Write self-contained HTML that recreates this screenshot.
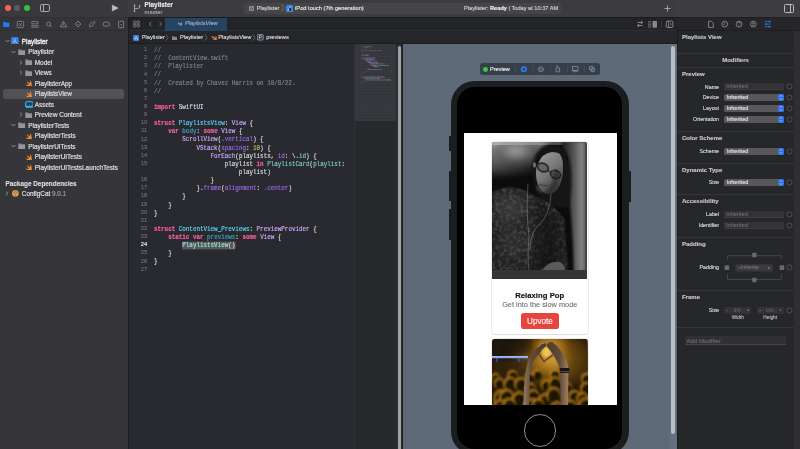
<!DOCTYPE html>
<html><head><meta charset="utf-8">
<style>
*{margin:0;padding:0;box-sizing:border-box}
html,body{width:800px;height:449px;overflow:hidden;background:#292a2f;font-family:"Liberation Sans",sans-serif}
.a{position:absolute}
.t{position:absolute;white-space:pre;line-height:1;-webkit-text-stroke:0.15px currentColor}
#W{position:absolute;left:0;top:0;width:800px;height:449px;will-change:transform;overflow:hidden}
#side{left:0;top:0;width:128px;height:449px;background:#363539}
#sidetb{left:0;top:0;width:128px;height:17px;background:#39383c}
#navtabs{left:0;top:17px;width:128px;height:14px;background:#353438;border-top:1px solid #302f33;border-bottom:1px solid #2e2d31}
#sidesep{left:128px;top:17px;width:1px;height:432px;background:#1e1d21}
#tb{left:128px;top:0;width:549px;height:17.5px;background:#3c3c3e;border-bottom:1px solid #1f1f22}
#tbr{left:677px;top:0;width:123px;height:18px;background:#3e3e40;border-bottom:1px solid #1f1f22}
#tabbar{left:129px;top:17px;width:548px;height:14px;background:#232427;border-top:1px solid #1b1b1e;border-bottom:1px solid #2d2e31}
#crumb{left:129px;top:31px;width:548px;height:13px;background:#252629;border-bottom:1px solid #1c1c1f}
#code{left:129px;top:44px;width:225px;height:405px;background:#292a2f}
#mini{left:354px;top:44px;width:49px;height:405px;background:#28292d}
#canvas{left:403px;top:44px;width:274px;height:405px;background:#5f6a78}
#insp{left:677px;top:18px;width:123px;height:431px;background:#262729;border-left:1px solid #1b1b1d}
.row{font-size:6.4px;color:#dcdcde;-webkit-text-stroke:0.22px currentColor}
.code{font-family:"Liberation Mono",monospace;font-size:6.4px;color:#dfdfe0;transform:scaleX(0.922);transform-origin:0 0}
.ln{font-family:"Liberation Sans",sans-serif;font-size:5.8px;color:#6c6c71;text-align:right;width:20.2px}
.k{color:#fc5fa3;font-weight:bold}
.cm{color:#7a8692}
.ty{color:#5dd8ff}
.st{color:#d0a8ff}
.sf{color:#a167e6}
.pj{color:#7ccdb8}
.nm{color:#d0bf69}
.dc{color:#41a1c0}
.hl{color:#9fe3cf;background:#56585b;box-shadow:0 0 0 0.4px #56585b}
.il{font-size:5.3px;color:#d6d6d8;text-align:right;width:60px}
.sec{font-size:6px;font-weight:bold;color:#c8c8ca}
.fld{position:absolute;left:724px;width:60px;height:7px;background:#58585c;border-radius:1.5px}
.fld span{position:absolute;left:2.6px;top:1.5px;font-size:5.6px;color:#e8e8ea;white-space:pre;line-height:1;-webkit-text-stroke:0.12px currentColor}
.fld i{position:absolute;right:0;top:0;width:6px;height:7px;background:#2f6fe4;border-radius:1.5px}
.rad{position:absolute;left:786.5px;width:5.5px;height:5.5px;border:0.6px solid #6a6a6e;border-radius:50%}
.hsep{position:absolute;left:677px;width:117px;height:1px;background:#353537}
</style></head><body><div id="W">
<!-- left sidebar -->
<div class="a" id="side"></div>
<div class="a" id="sidetb"></div>
<div class="a" id="navtabs"></div>
<div class="a" id="sidesep"></div>
<!-- traffic lights -->
<div class="a" style="left:4.7px;top:5px;width:6px;height:6px;border-radius:50%;background:#fe5f57"></div>
<div class="a" style="left:14px;top:5px;width:6px;height:6px;border-radius:50%;background:#5b5a5e"></div>
<div class="a" style="left:23.7px;top:5px;width:6px;height:6px;border-radius:50%;background:#29c73f"></div>
<!-- sidebar toggle -->
<div class="a" style="left:40.1px;top:4.1px;width:9.8px;height:7.9px;border:0.8px solid #ababae;border-radius:1.8px"></div>
<div class="a" style="left:42.6px;top:4.5px;width:0.8px;height:7.2px;background:#ababae"></div>
<!-- play -->
<svg class="a" style="left:111px;top:4px" width="8" height="8" viewBox="0 0 8 8"><path d="M1.2 1 L7.4 4.1 L1.2 7.2Z" fill="#c2c2c4" stroke="#c2c2c4" stroke-width="0.3" stroke-linejoin="round"/></svg>

<!-- nav tab icons -->
<svg class="a" style="left:0;top:18px" width="128" height="12" viewBox="0 0 128 12">
 <path d="M3.2 4 h2.5 l0.7 0.8 h3 v4.2 h-6.2z" fill="#1f7cf6"/>
 <rect x="17.2" y="3.4" width="6.4" height="6.2" rx="1" fill="none" stroke="#9a9a9d" stroke-width="0.7"/>
 <path d="M19 5.2 l2.8 2.8 M21.8 5.2 l-2.8 2.8" stroke="#9a9a9d" stroke-width="0.6"/>
 <path d="M31.8 3.6 h6.2 v2.2 h-6.2z M31.8 7.4 h2.4 v2 h-2.4z M35.6 7.4 h2.4 v2 h-2.4z" fill="none" stroke="#9a9a9d" stroke-width="0.6"/>
 <circle cx="48.6" cy="6" r="2" fill="none" stroke="#9a9a9d" stroke-width="0.7"/>
 <path d="M50 7.4 l1.8 1.8" stroke="#9a9a9d" stroke-width="0.7"/>
 <path d="M63.5 3.2 l3.1 5.6 h-6.2z" fill="none" stroke="#9a9a9d" stroke-width="0.7"/><path d="M63.5 5.2 v1.8 M63.5 7.7 v0.4" stroke="#9a9a9d" stroke-width="0.6"/>
 <path d="M78 3 l3 3 l-3 3 l-3 -3z" fill="none" stroke="#9a9a9d" stroke-width="0.7"/><path d="M76.8 6.6 q1.2 -1.2 2.4 0" fill="none" stroke="#9a9a9d" stroke-width="0.5"/>
 <path d="M89.6 8.8 l0.2 -2.6 l2.4 -2.4 l1 1 l-0.4 3z" fill="none" stroke="#9a9a9d" stroke-width="0.6"/><path d="M93.6 3.6 l1.2 -0.6 v2.6" fill="none" stroke="#9a9a9d" stroke-width="0.55"/>
 <rect x="103.4" y="4.2" width="6.2" height="3.8" rx="1" fill="none" stroke="#9a9a9d" stroke-width="0.7"/>
 <rect x="118.6" y="3.2" width="5" height="6.4" rx="0.6" fill="none" stroke="#9a9a9d" stroke-width="0.7"/><rect x="120.7" y="6" width="0.9" height="1.2" fill="#9a9a9d"/>
</svg>

<!-- tree -->
<div class="a" style="left:3.3px;top:88.7px;width:120.5px;height:10.4px;background:#525155;border-radius:2.5px"></div>
<svg class="a" style="left:4.5px;top:39.3px" width="5" height="4" viewBox="0 0 5 4"><path d="M0.6 1 L2.5 3 L4.4 1" fill="none" stroke="#a6a6aa" stroke-width="0.8"/></svg>
<svg class="a" style="left:11.3px;top:36.8px" width="7.7" height="7.7" viewBox="0 0 7.7 7.7"><rect width="7.7" height="7.7" rx="1.7" fill="#3a80e0"/><path d="M3.85 1.6 V4.1 M3.85 4.1 L1.8 5.8 M3.85 4.1 L5.9 5.8" stroke="#e3edf9" stroke-width="0.6" fill="none"/></svg>
<div class="t row" style="left:21.8px;top:38.715999999999994px;-webkit-text-stroke:0.35px #ececee;color:#ececee">Playlister</div>
<svg class="a" style="left:11.3px;top:49.8px" width="5" height="4" viewBox="0 0 5 4"><path d="M0.6 1 L2.5 3 L4.4 1" fill="none" stroke="#a6a6aa" stroke-width="0.8"/></svg>
<svg class="a" style="left:18.400000000000002px;top:48.8px" width="7.4" height="6.2" viewBox="0 0 7 6"><path d="M0.2 0.5 h2.4 l0.6 0.6 h3.6 v4.6 h-6.6z" fill="#96969a"/><path d="M0.2 1.5 h6.6" stroke="#6e6e72" stroke-width="0.35"/></svg>
<div class="t row" style="left:28.3px;top:49.215999999999994px">Playlister</div>
<svg class="a" style="left:18.8px;top:59.8px" width="4" height="5" viewBox="0 0 4 5"><path d="M1 0.6 L3 2.5 L1 4.4" fill="none" stroke="#a6a6aa" stroke-width="0.8"/></svg>
<svg class="a" style="left:24.900000000000002px;top:59.3px" width="7.4" height="6.2" viewBox="0 0 7 6"><path d="M0.2 0.5 h2.4 l0.6 0.6 h3.6 v4.6 h-6.6z" fill="#96969a"/><path d="M0.2 1.5 h6.6" stroke="#6e6e72" stroke-width="0.35"/></svg>
<div class="t row" style="left:34.8px;top:59.715999999999994px">Model</div>
<svg class="a" style="left:18.8px;top:70.3px" width="4" height="5" viewBox="0 0 4 5"><path d="M1 0.6 L3 2.5 L1 4.4" fill="none" stroke="#a6a6aa" stroke-width="0.8"/></svg>
<svg class="a" style="left:24.900000000000002px;top:69.8px" width="7.4" height="6.2" viewBox="0 0 7 6"><path d="M0.2 0.5 h2.4 l0.6 0.6 h3.6 v4.6 h-6.6z" fill="#96969a"/><path d="M0.2 1.5 h6.6" stroke="#6e6e72" stroke-width="0.35"/></svg>
<div class="t row" style="left:34.8px;top:70.216px">Views</div>
<svg class="a" style="left:25.0px;top:80.1px" width="7.2" height="6.4" viewBox="2.3 3.3 18.4 16.5"><path d="M13.543 3.41c4.114 2.47 6.545 7.162 5.549 11.131-.024.093-.05.181-.076.272l.002.001c2.062 2.538 1.5 5.258 1.236 4.745-1.072-2.086-3.066-1.568-4.088-1.043a6.803 6.803 0 0 1-.281.158l-.02.012-.002.002c-2.115 1.123-4.957 1.205-7.812-.022a12.568 12.568 0 0 1-5.640-4.838c.649.48 1.35.902 2.097 1.252 3.019 1.414 6.051 1.311 8.197-.002C9.651 12.73 7.101 9.67 5.146 7.191a10.628 10.628 0 0 1-1.005-1.384c2.34 2.142 6.038 4.83 7.365 5.576C8.69 8.408 6.208 4.743 6.324 4.86c4.436 4.46 8.528 6.987 8.528 6.987.154.085.27.157.36.22.085-.22.16-.447.224-.682.708-2.565-.09-5.49-1.893-7.976z" fill="#f58b36"/></svg>
<div class="t row" style="left:34.8px;top:80.716px">PlaylisterApp</div>
<svg class="a" style="left:25.0px;top:90.6px" width="7.2" height="6.4" viewBox="2.3 3.3 18.4 16.5"><path d="M13.543 3.41c4.114 2.47 6.545 7.162 5.549 11.131-.024.093-.05.181-.076.272l.002.001c2.062 2.538 1.5 5.258 1.236 4.745-1.072-2.086-3.066-1.568-4.088-1.043a6.803 6.803 0 0 1-.281.158l-.02.012-.002.002c-2.115 1.123-4.957 1.205-7.812-.022a12.568 12.568 0 0 1-5.640-4.838c.649.48 1.35.902 2.097 1.252 3.019 1.414 6.051 1.311 8.197-.002C9.651 12.73 7.101 9.67 5.146 7.191a10.628 10.628 0 0 1-1.005-1.384c2.34 2.142 6.038 4.83 7.365 5.576C8.69 8.408 6.208 4.743 6.324 4.86c4.436 4.46 8.528 6.987 8.528 6.987.154.085.27.157.36.22.085-.22.16-.447.224-.682.708-2.565-.09-5.49-1.893-7.976z" fill="#f58b36"/></svg>
<div class="t row" style="left:34.8px;top:91.216px">PlaylistsView</div>
<svg class="a" style="left:24.5px;top:100.89999999999999px" width="8.6" height="7.2" viewBox="0 0 8.6 7.2"><rect x="0.5" y="0.5" width="7.6" height="6.2" rx="1.6" fill="#1f5878" stroke="#3fb2ea" stroke-width="0.9"/><path d="M1 4.8 Q4.3 3.6 7.6 4.8 V6.2 H1z" fill="#2fb0f2"/><ellipse cx="4.3" cy="3.4" rx="2" ry="1.2" fill="#15222c"/><circle cx="4.3" cy="3.4" r="0.5" fill="#3fb2ea"/></svg>
<div class="t row" style="left:34.8px;top:101.716px">Assets</div>
<svg class="a" style="left:18.8px;top:112.3px" width="4" height="5" viewBox="0 0 4 5"><path d="M1 0.6 L3 2.5 L1 4.4" fill="none" stroke="#a6a6aa" stroke-width="0.8"/></svg>
<svg class="a" style="left:24.900000000000002px;top:111.8px" width="7.4" height="6.2" viewBox="0 0 7 6"><path d="M0.2 0.5 h2.4 l0.6 0.6 h3.6 v4.6 h-6.6z" fill="#96969a"/><path d="M0.2 1.5 h6.6" stroke="#6e6e72" stroke-width="0.35"/></svg>
<div class="t row" style="left:34.8px;top:112.216px">Preview Content</div>
<svg class="a" style="left:11.3px;top:123.3px" width="5" height="4" viewBox="0 0 5 4"><path d="M0.6 1 L2.5 3 L4.4 1" fill="none" stroke="#a6a6aa" stroke-width="0.8"/></svg>
<svg class="a" style="left:18.400000000000002px;top:122.3px" width="7.4" height="6.2" viewBox="0 0 7 6"><path d="M0.2 0.5 h2.4 l0.6 0.6 h3.6 v4.6 h-6.6z" fill="#96969a"/><path d="M0.2 1.5 h6.6" stroke="#6e6e72" stroke-width="0.35"/></svg>
<div class="t row" style="left:28.3px;top:122.716px">PlaylisterTests</div>
<svg class="a" style="left:25.0px;top:132.60000000000002px" width="7.2" height="6.4" viewBox="2.3 3.3 18.4 16.5"><path d="M13.543 3.41c4.114 2.47 6.545 7.162 5.549 11.131-.024.093-.05.181-.076.272l.002.001c2.062 2.538 1.5 5.258 1.236 4.745-1.072-2.086-3.066-1.568-4.088-1.043a6.803 6.803 0 0 1-.281.158l-.02.012-.002.002c-2.115 1.123-4.957 1.205-7.812-.022a12.568 12.568 0 0 1-5.640-4.838c.649.48 1.35.902 2.097 1.252 3.019 1.414 6.051 1.311 8.197-.002C9.651 12.73 7.101 9.67 5.146 7.191a10.628 10.628 0 0 1-1.005-1.384c2.34 2.142 6.038 4.83 7.365 5.576C8.69 8.408 6.208 4.743 6.324 4.86c4.436 4.46 8.528 6.987 8.528 6.987.154.085.27.157.36.22.085-.22.16-.447.224-.682.708-2.565-.09-5.49-1.893-7.976z" fill="#f58b36"/></svg>
<div class="t row" style="left:34.8px;top:133.216px">PlaylisterTests</div>
<svg class="a" style="left:11.3px;top:144.3px" width="5" height="4" viewBox="0 0 5 4"><path d="M0.6 1 L2.5 3 L4.4 1" fill="none" stroke="#a6a6aa" stroke-width="0.8"/></svg>
<svg class="a" style="left:18.400000000000002px;top:143.3px" width="7.4" height="6.2" viewBox="0 0 7 6"><path d="M0.2 0.5 h2.4 l0.6 0.6 h3.6 v4.6 h-6.6z" fill="#96969a"/><path d="M0.2 1.5 h6.6" stroke="#6e6e72" stroke-width="0.35"/></svg>
<div class="t row" style="left:28.3px;top:143.716px">PlaylisterUITests</div>
<svg class="a" style="left:25.0px;top:153.60000000000002px" width="7.2" height="6.4" viewBox="2.3 3.3 18.4 16.5"><path d="M13.543 3.41c4.114 2.47 6.545 7.162 5.549 11.131-.024.093-.05.181-.076.272l.002.001c2.062 2.538 1.5 5.258 1.236 4.745-1.072-2.086-3.066-1.568-4.088-1.043a6.803 6.803 0 0 1-.281.158l-.02.012-.002.002c-2.115 1.123-4.957 1.205-7.812-.022a12.568 12.568 0 0 1-5.640-4.838c.649.48 1.35.902 2.097 1.252 3.019 1.414 6.051 1.311 8.197-.002C9.651 12.73 7.101 9.67 5.146 7.191a10.628 10.628 0 0 1-1.005-1.384c2.34 2.142 6.038 4.83 7.365 5.576C8.69 8.408 6.208 4.743 6.324 4.86c4.436 4.46 8.528 6.987 8.528 6.987.154.085.27.157.36.22.085-.22.16-.447.224-.682.708-2.565-.09-5.49-1.893-7.976z" fill="#f58b36"/></svg>
<div class="t row" style="left:34.8px;top:154.216px">PlaylisterUITests</div>
<svg class="a" style="left:25.0px;top:164.10000000000002px" width="7.2" height="6.4" viewBox="2.3 3.3 18.4 16.5"><path d="M13.543 3.41c4.114 2.47 6.545 7.162 5.549 11.131-.024.093-.05.181-.076.272l.002.001c2.062 2.538 1.5 5.258 1.236 4.745-1.072-2.086-3.066-1.568-4.088-1.043a6.803 6.803 0 0 1-.281.158l-.02.012-.002.002c-2.115 1.123-4.957 1.205-7.812-.022a12.568 12.568 0 0 1-5.640-4.838c.649.48 1.35.902 2.097 1.252 3.019 1.414 6.051 1.311 8.197-.002C9.651 12.73 7.101 9.67 5.146 7.191a10.628 10.628 0 0 1-1.005-1.384c2.34 2.142 6.038 4.83 7.365 5.576C8.69 8.408 6.208 4.743 6.324 4.86c4.436 4.46 8.528 6.987 8.528 6.987.154.085.27.157.36.22.085-.22.16-.447.224-.682.708-2.565-.09-5.49-1.893-7.976z" fill="#f58b36"/></svg>
<div class="t row" style="left:34.8px;top:164.716px">PlaylisterUITestsLaunchTests</div>
<div class="t" style="left:5.5px;top:180.716px;font-size:6.4px;font-weight:bold;color:#dcdcde">Package Dependencies</div>
<svg class="a" style="left:5px;top:191.3px" width="4" height="5" viewBox="0 0 4 5"><path d="M1 0.6 L3 2.5 L1 4.4" fill="none" stroke="#a6a6aa" stroke-width="0.8"/></svg>
<svg class="a" style="left:11.9px;top:190.4px" width="6.8" height="6.8" viewBox="0 0 6.8 6.8"><circle cx="3.4" cy="3.4" r="3.3" fill="#dba04e"/><path d="M3.4 3.6 V6.4 M3.4 3.6 L1.1 1.6 M3.4 3.6 L5.7 1.6 M2.2 2.6 L3.4 0.6 L4.6 2.6" fill="none" stroke="#8a5a1e" stroke-width="0.45"/></svg>
<div class="t row" style="left:21.8px;top:191.216px">ConfigCat <span style="color:#9a9a9d">9.0.1</span></div>

<!-- editor toolbar -->
<div class="a" id="tb"></div>
<div class="a" id="tbr"></div>
<svg class="a" style="left:133px;top:4px" width="8" height="9" viewBox="0 0 8 9"><circle cx="1.5" cy="1.4" r="0.8" fill="#bdbdc0"/><circle cx="1.5" cy="7.2" r="0.8" fill="#bdbdc0"/><circle cx="6.6" cy="1.7" r="0.8" fill="#bdbdc0"/><path d="M1.5 1.4 V7.2 M1.5 4.4 H5.4 Q6.6 4.4 6.6 3.2 V1.7" fill="none" stroke="#bdbdc0" stroke-width="0.75"/></svg>
<div class="t" style="left:144.5px;top:1.5px;font-size:6.4px;font-weight:bold;color:#e6e6e8">Playlister</div>
<div class="t" style="left:144.6px;top:9.5px;font-size:5.8px;color:#a2a2a5">master</div>
<!-- scheme bar -->
<div class="a" style="left:244.1px;top:3px;width:317.4px;height:10.5px;background:#454547;border-radius:3px"></div>
<svg class="a" style="left:248.9px;top:5.6px" width="5" height="5" viewBox="0 0 5 5"><rect width="5" height="5" rx="1" fill="#8e8e91"/><path d="M2.5 1 L1.3 3.8 M2.5 1 L3.7 3.8 M1 3.1 h3" stroke="#3f3e42" stroke-width="0.45" fill="none"/></svg>
<div class="t" style="left:256.7px;top:6px;font-size:5.6px;color:#cfcfd1">Playlister</div>
<svg class="a" style="left:280.8px;top:4.4px" width="3.6" height="7.8" viewBox="0 0 3.6 7.8"><path d="M0.6 0.4 L3 3.9 L0.6 7.4" fill="none" stroke="#a0a0a3" stroke-width="0.5"/></svg>
<svg class="a" style="left:285.9px;top:4.9px" width="7.4" height="7.2" viewBox="0 0 7.4 7.2"><rect width="7.4" height="7.2" rx="1.6" fill="#3a86e8"/><path d="M2 5.8 L4.6 1.2" stroke="#e8f0ff" stroke-width="0.7"/><path d="M3.8 2.5 q1.6 0.4 1.5 2 q-0.4 1.5 -1.8 1.6 q-1 -1.8 0.3 -3.6z" fill="#1a1a22"/></svg>
<div class="t" style="left:295.1px;top:6px;font-size:5.7px;color:#e6e6e8">iPod touch (7th generation)</div>
<div class="t" style="left:464px;top:6px;font-size:5.65px;color:#cfcfd1">Playlister: <b style="color:#f0f0f2">Ready</b> | Today at 10:37 AM</div>
<svg class="a" style="left:663.6px;top:4.6px" width="7" height="7" viewBox="0 0 7 7"><path d="M3.5 0.5 v6 M0.5 3.5 h6" stroke="#b9b9bc" stroke-width="0.8"/></svg>
<div class="a" style="left:784px;top:4px;width:10px;height:8.5px;border:0.8px solid #bdbdc0;border-radius:1.5px"></div>
<div class="a" style="left:790px;top:4.5px;width:0.8px;height:7.5px;background:#bdbdc0"></div>

<!-- tab bar -->
<div class="a" id="tabbar"></div>
<div class="a" style="left:165.2px;top:17.8px;width:61.8px;height:12.8px;background:#274363"></div>
<svg class="a" style="left:132px;top:20px" width="40" height="8" viewBox="0 0 40 8">
 <rect x="1.5" y="1" width="2.4" height="2.4" rx="0.5" fill="none" stroke="#a9a9ac" stroke-width="0.6"/>
 <rect x="5" y="1" width="2.4" height="2.4" rx="0.5" fill="none" stroke="#a9a9ac" stroke-width="0.6"/>
 <rect x="1.5" y="4.5" width="2.4" height="2.4" rx="0.5" fill="none" stroke="#a9a9ac" stroke-width="0.6"/>
 <rect x="5" y="4.5" width="2.4" height="2.4" rx="0.5" fill="none" stroke="#a9a9ac" stroke-width="0.6"/>
 <path d="M19.3 1.8 l-1.8 2.2 l1.8 2.2 M27.6 1.8 l1.8 2.2 l-1.8 2.2" fill="none" stroke="#a9a9ac" stroke-width="0.6"/>
</svg>
<svg class="a" style="left:176.5px;top:21.4px" width="5.4" height="5" viewBox="0 0 7 6"><path d="M0.3 2 C1.8 3.4 3.2 4.1 4.6 4.4 C3.2 5 1.6 4.6 0.4 3.6 C1.5 4.8 3.5 6 5.6 5.4 C6.4 5.7 6.8 6 6.9 5.9 C6.6 5.2 6.5 4.6 6.6 3.9 C6.9 2.4 6 1 5 0.3 C5.6 1.6 5.6 2.7 5.1 3.4 C3.6 2.3 2 1.2 0.3 2z" fill="#8a9bb0"/></svg>
<div class="t" style="left:185px;top:21px;font-size:5.6px;font-style:italic;color:#9eabbb">PlaylistsView</div>
<svg class="a" style="left:634px;top:19px" width="42" height="10" viewBox="0 0 42 10">
 <path d="M3.6 3.4 h5 M7.2 2 l1.4 1.4 l-1.4 1.4 M8.6 6.6 h-5 M5 5.2 l-1.4 1.4 l1.4 1.4" fill="none" stroke="#b0b0b3" stroke-width="0.75"/>
 <path d="M14 2.6 h3.2 M14 4 h3.2 M14 5.4 h3.2 M14 6.8 h3.2 M14 8.2 h3.2" stroke="#9a9a9d" stroke-width="0.5"/>
 <rect x="18.6" y="2" width="4.2" height="6.6" fill="#9a9a9d"/>
 <path d="M19.4 3 h2.6 M19.4 4.4 h2.6 M19.4 5.8 h2.6 M19.4 7.2 h2.6" stroke="#5a5a5e" stroke-width="0.4"/>
 <path d="M27.5 1.8 v6.6" stroke="#454548" stroke-width="0.6"/>
 <rect x="32.3" y="2.1" width="6.6" height="6.4" rx="1.2" fill="none" stroke="#b0b0b3" stroke-width="0.7"/>
 <path d="M34.6 2.1 v6.4 M36.2 4 l1.1 1.3 l-1.1 1.3" fill="none" stroke="#b0b0b3" stroke-width="0.6"/>
</svg>

<!-- breadcrumb -->
<div class="a" id="crumb"></div>
<svg class="a" style="left:132.8px;top:34.5px" width="6.4" height="6" viewBox="0 0 6.4 6"><rect width="6.4" height="6" rx="1.2" fill="#3b7fdc"/><path d="M3.2 1.2 L1.5 4.6 M3.2 1.2 L4.9 4.6 M1.1 3.8 h4.2" stroke="#dfe9f8" stroke-width="0.5" fill="none"/></svg>
<div class="t" style="left:141.8px;top:35.1px;font-size:5.7px;color:#d8d8da">Playlister</div>
<svg class="a" style="left:165px;top:34.3px" width="4" height="7" viewBox="0 0 4 7"><path d="M0.8 0.4 L3.2 3.5 L0.8 6.6" fill="none" stroke="#9a9a9d" stroke-width="0.5"/></svg>
<svg class="a" style="left:171.6px;top:35.5px" width="5.6" height="4.6" viewBox="0 0 5.6 4.6"><path d="M0 0.3 h2 l0.5 0.5 h3.1 v3.8 h-5.6z" fill="#8a8a8e"/><path d="M0 1.3 h5.6" stroke="#6a6a6e" stroke-width="0.35"/></svg>
<div class="t" style="left:180px;top:35.1px;font-size:5.7px;color:#d8d8da">Playlister</div>
<svg class="a" style="left:203.6px;top:34.3px" width="4" height="7" viewBox="0 0 4 7"><path d="M0.8 0.4 L3.2 3.5 L0.8 6.6" fill="none" stroke="#9a9a9d" stroke-width="0.5"/></svg>
<svg class="a" style="left:210.5px;top:34.8px" width="6" height="5.4" viewBox="0 0 7 6"><path d="M0.3 2 C1.8 3.4 3.2 4.1 4.6 4.4 C3.2 5 1.6 4.6 0.4 3.6 C1.5 4.8 3.5 6 5.6 5.4 C6.4 5.7 6.8 6 6.9 5.9 C6.6 5.2 6.5 4.6 6.6 3.9 C6.9 2.4 6 1 5 0.3 C5.6 1.6 5.6 2.7 5.1 3.4 C3.6 2.3 2 1.2 0.3 2z" fill="#f48a37"/></svg>
<div class="t" style="left:218.3px;top:35.1px;font-size:5.7px;color:#d8d8da">PlaylistsView</div>
<svg class="a" style="left:252px;top:34.3px" width="4" height="7" viewBox="0 0 4 7"><path d="M0.8 0.4 L3.2 3.5 L0.8 6.6" fill="none" stroke="#9a9a9d" stroke-width="0.5"/></svg>
<svg class="a" style="left:257.2px;top:34.4px" width="6.6" height="6.4" viewBox="0 0 6.6 6.4"><rect x="0.35" y="0.35" width="5.9" height="5.7" rx="1" fill="#2c3440" stroke="#c8cdd4" stroke-width="0.6"/><path d="M2.3 4.9 V1.6 h1.3 q1.1 0 1.1 1 q0 1 -1.1 1 h-1.3" fill="none" stroke="#e8eaee" stroke-width="0.65"/></svg>
<div class="t" style="left:266.3px;top:35.1px;font-size:5.7px;color:#d8d8da">previews</div>

<!-- code -->
<div class="a" id="code"></div>
<div class="t ln" style="left:127px;top:47.141999999999996px">1</div>
<div class="t code" style="left:153.6px;top:48.041999999999994px"><span class="cm">//</span></div>
<div class="t ln" style="left:127px;top:55.272px">2</div>
<div class="t code" style="left:153.6px;top:56.172px"><span class="cm">//  ContentView.swift</span></div>
<div class="t ln" style="left:127px;top:63.402px">3</div>
<div class="t code" style="left:153.6px;top:64.302px"><span class="cm">//  Playlister</span></div>
<div class="t ln" style="left:127px;top:71.532px">4</div>
<div class="t code" style="left:153.6px;top:72.432px"><span class="cm">//</span></div>
<div class="t ln" style="left:127px;top:79.66199999999999px">5</div>
<div class="t code" style="left:153.6px;top:80.562px"><span class="cm">//  Created by Chavez Harris on 10/8/22.</span></div>
<div class="t ln" style="left:127px;top:87.792px">6</div>
<div class="t code" style="left:153.6px;top:88.69200000000001px"><span class="cm">//</span></div>
<div class="t ln" style="left:127px;top:95.922px">7</div>
<div class="t ln" style="left:127px;top:104.052px">8</div>
<div class="t code" style="left:153.6px;top:104.95200000000001px"><span class="k">import</span> SwiftUI</div>
<div class="t ln" style="left:127px;top:112.182px">9</div>
<div class="t ln" style="left:127px;top:120.312px">10</div>
<div class="t code" style="left:153.6px;top:121.212px"><span class="k">struct</span> <span class="ty">PlaylistsView</span>: <span class="st">View</span> {</div>
<div class="t ln" style="left:127px;top:128.44200000000004px">11</div>
<div class="t code" style="left:153.6px;top:129.34200000000004px">    <span class="k">var</span> <span class="dc">body</span>: <span class="k">some</span> <span class="st">View</span> {</div>
<div class="t ln" style="left:127px;top:136.57200000000003px">12</div>
<div class="t code" style="left:153.6px;top:137.47200000000004px">        <span class="st">ScrollView</span>(<span class="sf">.vertical</span>) {</div>
<div class="t ln" style="left:127px;top:144.70200000000003px">13</div>
<div class="t code" style="left:153.6px;top:145.60200000000003px">            <span class="st">VStack</span>(<span class="sf">spacing</span>: <span class="nm">10</span>) {</div>
<div class="t ln" style="left:127px;top:152.83200000000002px">14</div>
<div class="t code" style="left:153.6px;top:153.73200000000003px">                <span class="st">ForEach</span>(playlists, <span class="sf">id</span>: \.<span class="pj">id</span>) {</div>
<div class="t ln" style="left:127px;top:160.96200000000002px">15</div>
<div class="t code" style="left:153.6px;top:161.86200000000002px">                    playlist <span class="k">in</span> <span class="pj">PlaylistCard</span>(<span class="pj">playlist</span>:</div>
<div class="t code" style="left:153.6px;top:169.99200000000002px">                        playlist)</div>
<div class="t ln" style="left:127px;top:177.222px">16</div>
<div class="t code" style="left:153.6px;top:178.122px">                }</div>
<div class="t ln" style="left:127px;top:185.352px">17</div>
<div class="t code" style="left:153.6px;top:186.252px">            }.<span class="sf">frame</span>(<span class="sf">alignment</span>: <span class="sf">.center</span>)</div>
<div class="t ln" style="left:127px;top:193.482px">18</div>
<div class="t code" style="left:153.6px;top:194.382px">        }</div>
<div class="t ln" style="left:127px;top:201.61200000000005px">19</div>
<div class="t code" style="left:153.6px;top:202.51200000000006px">    }</div>
<div class="t ln" style="left:127px;top:209.74200000000005px">20</div>
<div class="t code" style="left:153.6px;top:210.64200000000005px">}</div>
<div class="t ln" style="left:127px;top:217.87200000000004px">21</div>
<div class="t ln" style="left:127px;top:226.00200000000004px">22</div>
<div class="t code" style="left:153.6px;top:226.90200000000004px"><span class="k">struct</span> <span class="ty">ContentView_Previews</span>: <span class="st">PreviewProvider</span> {</div>
<div class="t ln" style="left:127px;top:234.13200000000003px">23</div>
<div class="t code" style="left:153.6px;top:235.03200000000004px">    <span class="k">static</span> <span class="k">var</span> <span class="dc">previews</span>: <span class="k">some</span> <span class="st">View</span> {</div>
<div class="t ln" style="left:127px;top:242.26200000000003px;color:#e6e6e8">24</div>
<div class="t code" style="left:153.6px;top:243.16200000000003px">        <span class="hl">PlaylistsView<span style="color:#d6d6d8">()</span></span></div>
<div class="t ln" style="left:127px;top:250.39200000000002px">25</div>
<div class="t code" style="left:153.6px;top:251.29200000000003px">    }</div>
<div class="t ln" style="left:127px;top:258.522px">26</div>
<div class="t code" style="left:153.6px;top:259.42199999999997px">}</div>
<div class="t ln" style="left:127px;top:266.652px">27</div>

<!-- minimap -->
<div class="a" id="mini"></div>
<div class="a" style="left:354px;top:44px;width:42px;height:77px;background:#34353a"></div>
<div class="a" style="left:354px;top:44px;width:42px;height:77px;background-image:radial-gradient(circle at 0.5px 0.5px,rgba(255,255,255,0.05) 0.5px,transparent 0.6px);background-size:1.5px 1.5px"></div>
<div class="a" style="left:354px;top:44px;width:1px;height:405px;background:#2f3035"></div>
<svg class="a" style="left:354px;top:44px" width="42" height="80" viewBox="0 0 42 80"><rect x="7.70" y="0.50" width="1.00" height="0.8" fill="#6c7986" opacity="0.6"/><rect x="7.70" y="1.96" width="1.00" height="0.8" fill="#6c7986" opacity="0.6"/><rect x="9.70" y="1.96" width="8.50" height="0.8" fill="#6c7986" opacity="0.6"/><rect x="7.70" y="3.42" width="1.00" height="0.8" fill="#6c7986" opacity="0.6"/><rect x="9.70" y="3.42" width="5.00" height="0.8" fill="#6c7986" opacity="0.6"/><rect x="7.70" y="4.88" width="1.00" height="0.8" fill="#6c7986" opacity="0.6"/><rect x="7.70" y="6.34" width="1.00" height="0.8" fill="#6c7986" opacity="0.6"/><rect x="9.70" y="6.34" width="3.50" height="0.8" fill="#6c7986" opacity="0.6"/><rect x="13.70" y="6.34" width="1.00" height="0.8" fill="#6c7986" opacity="0.6"/><rect x="15.20" y="6.34" width="3.00" height="0.8" fill="#6c7986" opacity="0.6"/><rect x="18.70" y="6.34" width="3.00" height="0.8" fill="#6c7986" opacity="0.6"/><rect x="22.20" y="6.34" width="1.00" height="0.8" fill="#6c7986" opacity="0.6"/><rect x="23.70" y="6.34" width="4.00" height="0.8" fill="#6c7986" opacity="0.6"/><rect x="7.70" y="7.80" width="1.00" height="0.8" fill="#6c7986" opacity="0.6"/><rect x="7.70" y="10.72" width="3.00" height="0.8" fill="#fc5fa3" opacity="0.6"/><rect x="11.20" y="10.72" width="3.50" height="0.8" fill="#b9b9bc" opacity="0.6"/><rect x="7.70" y="13.64" width="3.00" height="0.8" fill="#fc5fa3" opacity="0.6"/><rect x="11.20" y="13.64" width="6.50" height="0.8" fill="#5dd8ff" opacity="0.6"/><rect x="17.70" y="13.64" width="0.50" height="0.8" fill="#b9b9bc" opacity="0.6"/><rect x="18.70" y="13.64" width="2.00" height="0.8" fill="#d0a8ff" opacity="0.6"/><rect x="21.20" y="13.64" width="0.50" height="0.8" fill="#b9b9bc" opacity="0.6"/><rect x="9.70" y="15.10" width="1.50" height="0.8" fill="#fc5fa3" opacity="0.6"/><rect x="11.70" y="15.10" width="2.00" height="0.8" fill="#41a1c0" opacity="0.6"/><rect x="13.70" y="15.10" width="0.50" height="0.8" fill="#b9b9bc" opacity="0.6"/><rect x="14.70" y="15.10" width="2.00" height="0.8" fill="#fc5fa3" opacity="0.6"/><rect x="17.20" y="15.10" width="2.00" height="0.8" fill="#d0a8ff" opacity="0.6"/><rect x="19.70" y="15.10" width="0.50" height="0.8" fill="#b9b9bc" opacity="0.6"/><rect x="11.70" y="16.56" width="5.00" height="0.8" fill="#d0a8ff" opacity="0.6"/><rect x="16.70" y="16.56" width="0.50" height="0.8" fill="#b9b9bc" opacity="0.6"/><rect x="17.20" y="16.56" width="4.50" height="0.8" fill="#a167e6" opacity="0.6"/><rect x="21.70" y="16.56" width="0.50" height="0.8" fill="#b9b9bc" opacity="0.6"/><rect x="22.70" y="16.56" width="0.50" height="0.8" fill="#b9b9bc" opacity="0.6"/><rect x="13.70" y="18.02" width="3.00" height="0.8" fill="#d0a8ff" opacity="0.6"/><rect x="16.70" y="18.02" width="0.50" height="0.8" fill="#b9b9bc" opacity="0.6"/><rect x="17.20" y="18.02" width="3.50" height="0.8" fill="#a167e6" opacity="0.6"/><rect x="20.70" y="18.02" width="0.50" height="0.8" fill="#b9b9bc" opacity="0.6"/><rect x="21.70" y="18.02" width="1.00" height="0.8" fill="#d0bf69" opacity="0.6"/><rect x="22.70" y="18.02" width="0.50" height="0.8" fill="#b9b9bc" opacity="0.6"/><rect x="23.70" y="18.02" width="0.50" height="0.8" fill="#b9b9bc" opacity="0.6"/><rect x="15.70" y="19.48" width="3.50" height="0.8" fill="#d0a8ff" opacity="0.6"/><rect x="19.20" y="19.48" width="5.50" height="0.8" fill="#b9b9bc" opacity="0.6"/><rect x="25.20" y="19.48" width="1.00" height="0.8" fill="#a167e6" opacity="0.6"/><rect x="26.20" y="19.48" width="0.50" height="0.8" fill="#b9b9bc" opacity="0.6"/><rect x="27.20" y="19.48" width="1.00" height="0.8" fill="#b9b9bc" opacity="0.6"/><rect x="28.20" y="19.48" width="1.00" height="0.8" fill="#67b7a4" opacity="0.6"/><rect x="29.20" y="19.48" width="0.50" height="0.8" fill="#b9b9bc" opacity="0.6"/><rect x="30.20" y="19.48" width="0.50" height="0.8" fill="#b9b9bc" opacity="0.6"/><rect x="17.70" y="20.94" width="4.00" height="0.8" fill="#b9b9bc" opacity="0.6"/><rect x="22.20" y="20.94" width="1.00" height="0.8" fill="#fc5fa3" opacity="0.6"/><rect x="23.70" y="20.94" width="6.00" height="0.8" fill="#67b7a4" opacity="0.6"/><rect x="29.70" y="20.94" width="0.50" height="0.8" fill="#b9b9bc" opacity="0.6"/><rect x="30.20" y="20.94" width="4.00" height="0.8" fill="#67b7a4" opacity="0.6"/><rect x="34.20" y="20.94" width="0.50" height="0.8" fill="#b9b9bc" opacity="0.6"/><rect x="19.70" y="22.40" width="4.50" height="0.8" fill="#b9b9bc" opacity="0.6"/><rect x="15.70" y="23.86" width="0.50" height="0.8" fill="#b9b9bc" opacity="0.6"/><rect x="13.70" y="25.32" width="1.00" height="0.8" fill="#b9b9bc" opacity="0.6"/><rect x="14.70" y="25.32" width="2.50" height="0.8" fill="#a167e6" opacity="0.6"/><rect x="17.20" y="25.32" width="0.50" height="0.8" fill="#b9b9bc" opacity="0.6"/><rect x="17.70" y="25.32" width="4.50" height="0.8" fill="#a167e6" opacity="0.6"/><rect x="22.20" y="25.32" width="0.50" height="0.8" fill="#b9b9bc" opacity="0.6"/><rect x="23.20" y="25.32" width="3.50" height="0.8" fill="#a167e6" opacity="0.6"/><rect x="26.70" y="25.32" width="0.50" height="0.8" fill="#b9b9bc" opacity="0.6"/><rect x="11.70" y="26.78" width="0.50" height="0.8" fill="#b9b9bc" opacity="0.6"/><rect x="9.70" y="28.24" width="0.50" height="0.8" fill="#b9b9bc" opacity="0.6"/><rect x="7.70" y="29.70" width="0.50" height="0.8" fill="#b9b9bc" opacity="0.6"/><rect x="7.70" y="32.62" width="3.00" height="0.8" fill="#fc5fa3" opacity="0.6"/><rect x="11.20" y="32.62" width="10.00" height="0.8" fill="#5dd8ff" opacity="0.6"/><rect x="21.20" y="32.62" width="0.50" height="0.8" fill="#b9b9bc" opacity="0.6"/><rect x="22.20" y="32.62" width="7.50" height="0.8" fill="#d0a8ff" opacity="0.6"/><rect x="30.20" y="32.62" width="0.50" height="0.8" fill="#b9b9bc" opacity="0.6"/><rect x="9.70" y="34.08" width="3.00" height="0.8" fill="#fc5fa3" opacity="0.6"/><rect x="13.20" y="34.08" width="1.50" height="0.8" fill="#fc5fa3" opacity="0.6"/><rect x="15.20" y="34.08" width="4.00" height="0.8" fill="#41a1c0" opacity="0.6"/><rect x="19.20" y="34.08" width="0.50" height="0.8" fill="#b9b9bc" opacity="0.6"/><rect x="20.20" y="34.08" width="2.00" height="0.8" fill="#fc5fa3" opacity="0.6"/><rect x="22.70" y="34.08" width="2.00" height="0.8" fill="#d0a8ff" opacity="0.6"/><rect x="25.20" y="34.08" width="0.50" height="0.8" fill="#b9b9bc" opacity="0.6"/><rect x="11.70" y="35.54" width="9.00" height="0.8" fill="#8fa39a" opacity="0.6"/><rect x="21.20" y="35.54" width="12.00" height="0.8" fill="#8fa39a" opacity="0.6"/><rect x="33.20" y="35.54" width="3.50" height="0.8" fill="#b9b9bc" opacity="0.6"/><rect x="9.70" y="37.00" width="0.50" height="0.8" fill="#b9b9bc" opacity="0.6"/><rect x="7.70" y="38.46" width="0.50" height="0.8" fill="#b9b9bc" opacity="0.6"/></svg>
<div class="a" style="left:396px;top:44px;width:6.5px;height:405px;background:#2c2d31"></div>
<div class="a" style="left:397.8px;top:45.8px;width:3.7px;height:410px;background:#a2a2a4;border-radius:1.8px"></div>
<div class="a" style="left:402px;top:44px;width:1px;height:405px;background:#1d1e21"></div>

<!-- canvas -->
<div class="a" id="canvas"></div>
<div class="a" style="left:669.5px;top:44px;width:7px;height:405px;background:#647080"></div>
<div class="a" style="left:671px;top:46px;width:4.2px;height:388px;background:#babfc6;border-radius:2px"></div>
<div class="a" style="left:480px;top:63.2px;width:120px;height:11.6px;background:#363e4a;border-radius:2.5px"></div>
<div class="a" style="left:483.4px;top:67px;width:4.8px;height:4.8px;background:#34c84a;border-radius:50%"></div>
<div class="t" style="left:490px;top:67.4px;font-size:5.6px;color:#e8e8ea">Preview</div>
<div class="a" style="left:515px;top:65.5px;width:0.6px;height:7px;background:#444b56"></div>
<div class="a" style="left:532.5px;top:65.5px;width:0.6px;height:7px;background:#444b56"></div>
<div class="a" style="left:549.7px;top:65.5px;width:0.6px;height:7px;background:#444b56"></div>
<div class="a" style="left:566.8px;top:65.5px;width:0.6px;height:7px;background:#444b56"></div>
<div class="a" style="left:583.8px;top:65.5px;width:0.6px;height:7px;background:#444b56"></div>
<svg class="a" style="left:480px;top:63px" width="120" height="12" viewBox="0 0 120 12"><circle cx="43.8" cy="6.3" r="2.2" fill="none" stroke="#2a7df7" stroke-width="1.7"/><circle cx="60.8" cy="6.3" r="2.5" fill="none" stroke="#a9adb3" stroke-width="0.9" stroke-dasharray="1.1 0.5"/><circle cx="60.8" cy="6.3" r="1.3" fill="none" stroke="#a9adb3" stroke-width="0.4"/><rect x="76" y="5" width="3.6" height="3.8" rx="0.4" fill="none" stroke="#a9adb3" stroke-width="0.6"/><path d="M75.8 3.8 l0.8 -0.8 l0.8 0.8 M76.6 3 q1.8 0 2.2 1.6" fill="none" stroke="#a9adb3" stroke-width="0.5"/><rect x="92.4" y="3.4" width="5.6" height="4" rx="0.4" fill="none" stroke="#a9adb3" stroke-width="0.6"/><path d="M94 8.8 h2.6 M91.8 8 h7" stroke="#a9adb3" stroke-width="0.5"/><rect x="109.4" y="3.4" width="3.6" height="3.6" rx="0.5" fill="none" stroke="#a9adb3" stroke-width="0.6"/><rect x="111" y="5" width="3.6" height="3.6" rx="0.5" fill="none" stroke="#a9adb3" stroke-width="0.6"/></svg>
<div class="a" style="left:449px;top:136px;width:2.3px;height:15.300000000000011px;background:#1a1b1c;border-radius:0.5px"></div>
<div class="a" style="left:449px;top:170.7px;width:2.3px;height:30.5px;background:#1a1b1c;border-radius:0.5px"></div>
<div class="a" style="left:449px;top:209.3px;width:2.3px;height:31.0px;background:#1a1b1c;border-radius:0.5px"></div>
<div class="a" style="left:628.3px;top:170.7px;width:2.3px;height:31.0px;background:#1a1b1c;border-radius:0.5px"></div>
<div class="a" style="left:451px;top:81px;width:177.6px;height:373.5px;background:#1c1d1e;border-radius:23.5px"></div>
<div class="a" style="left:457.3px;top:87px;width:165.2px;height:361.5px;background:#000;border-radius:17.5px"></div>
<div class="a" style="left:463.5px;top:133px;width:153.5px;height:271.8px;background:#fff;overflow:hidden" id="screen"><div class="a" style="left:28.6px;top:9.3px;width:95.5px;height:191.3px;border-radius:2.6px;background:#fff;box-shadow:0 0 0 0.5px #d9d9dc, 0 0.6px 1px rgba(0,0,0,0.12)"></div><svg class="a" style="left:28.8px;top:9.3px;border-radius:2.6px 2.6px 0 0" width="95.2" height="137" viewBox="0 0 95.2 137">
<defs>
<filter id="b1" x="-50%" y="-50%" width="200%" height="200%"><feGaussianBlur stdDeviation="3"/></filter>
<filter id="b2" x="-50%" y="-50%" width="200%" height="200%"><feGaussianBlur stdDeviation="1.2"/></filter>
<filter id="b5" x="-50%" y="-50%" width="200%" height="200%"><feGaussianBlur stdDeviation="0.5"/></filter>
<filter id="b4" x="-50%" y="-50%" width="200%" height="200%"><feGaussianBlur stdDeviation="5"/></filter>
<filter id="nz" x="0" y="0" width="100%" height="100%"><feTurbulence type="fractalNoise" baseFrequency="0.28" numOctaves="2" seed="8"/><feColorMatrix values="0 0 0 0 0.45  0 0 0 0 0.45  0 0 0 0 0.45  0 0 0 2 -0.85"/><feGaussianBlur stdDeviation="0.45"/></filter>
<clipPath id="sw"><path d="M0 50 Q20 40 40 52 Q62 62 72 76 L76 128 L0 128z"/></clipPath>
<linearGradient id="wall" x1="0" y1="0" x2="1" y2="0"><stop offset="0" stop-color="#1a1a1a"/><stop offset="0.5" stop-color="#5a5a5a"/><stop offset="0.8" stop-color="#858585"/><stop offset="1" stop-color="#3a3a3a"/></linearGradient>
<linearGradient id="face" x1="0.2" y1="0" x2="0.8" y2="1"><stop offset="0" stop-color="#9c9c9c"/><stop offset="0.5" stop-color="#767676"/><stop offset="1" stop-color="#333"/></linearGradient>
<radialGradient id="glow" cx="0.5" cy="0.5" r="0.5"><stop offset="0" stop-color="#b4b4b4"/><stop offset="0.55" stop-color="#6a6a6a"/><stop offset="1" stop-color="#141414" stop-opacity="0"/></radialGradient>
<linearGradient id="topbar" x1="0" y1="0" x2="1" y2="0"><stop offset="0" stop-color="#d0d0d0"/><stop offset="0.6" stop-color="#a0a0a0"/><stop offset="1" stop-color="#505050"/></linearGradient>
<linearGradient id="glow2" x1="0.15" y1="0" x2="0.55" y2="1"><stop offset="0" stop-color="#b8b8b8"/><stop offset="0.45" stop-color="#6a6a6a"/><stop offset="1" stop-color="#121212"/></linearGradient>
</defs>
<rect width="95.2" height="137" fill="#0c0c0c"/>
<path d="M-4 -4 H56 Q52 14 40 30 Q18 36 -4 32z" fill="url(#glow2)" filter="url(#b1)"/>
<ellipse cx="24" cy="9" rx="26" ry="14" fill="url(#glow)" opacity="0.8" filter="url(#b1)"/>
<rect x="0" y="0" width="95.2" height="3" fill="url(#topbar)" filter="url(#b5)" opacity="0.55"/>
<path d="M70 0 H95.2 V137 H82 Q81 60 70 12z" fill="url(#wall)" filter="url(#b2)"/>
<path d="M40 30 Q40 6 58 3 Q74 2 78 20 Q82 45 76 66 L56 64 Q42 52 40 30z" fill="#151515" filter="url(#b2)"/>
<path d="M46 20 Q50 9 60 8 Q70 9 71 22 Q72 38 65 48 Q58 55 51 50 Q44 43 44 32 Q44 25 46 20z" fill="url(#face)" filter="url(#b5)"/>
<path d="M44 22 Q48 6 62 5 Q74 6 76 18 Q70 10 60 10 Q50 11 46 22z" fill="#121212" filter="url(#b5)"/>
<ellipse cx="52" cy="46" rx="8" ry="5" fill="#555" opacity="0.5" filter="url(#b2)"/>
<ellipse cx="42.5" cy="23" rx="1.6" ry="2.8" fill="#6a6a6a" filter="url(#b5)"/>
<ellipse cx="51" cy="25.5" rx="5.6" ry="4.2" fill="#3a3a3a" fill-opacity="0.45" stroke="#101010" stroke-width="1.2" transform="rotate(24 51 25.5)" filter="url(#b5)"/>
<ellipse cx="63.5" cy="32.5" rx="5.2" ry="4.1" fill="#2a2a2a" fill-opacity="0.5" stroke="#101010" stroke-width="1.2" transform="rotate(24 63.5 32.5)" filter="url(#b5)"/>
<path d="M56 28.6 l2.6 1.6" stroke="#101010" stroke-width="1"/>
<path d="M47 42 Q51 44.5 56 43.5" stroke="#383838" stroke-width="0.9" fill="none" filter="url(#b5)"/>
<path d="M64 26 Q70 42 60 52 Q54 55 50 52 Q62 44 64 26z" fill="#1a1a1a" opacity="0.5" filter="url(#b2)"/>
<path d="M0 50 Q20 40 40 52 Q62 62 72 76 L76 128 L0 128z" fill="#232323" filter="url(#b2)"/>
<g clip-path="url(#sw)" opacity="0.3"><rect x="0" y="38" width="80" height="92" fill="#000" filter="url(#nz)"/></g>
<ellipse cx="18" cy="66" rx="16" ry="16" fill="#7a7a7a" opacity="0.2" filter="url(#b4)"/>
<ellipse cx="22" cy="100" rx="14" ry="16" fill="#6a6a6a" opacity="0.14" filter="url(#b4)"/>
<path d="M46 62 Q64 68 68 90 Q70 112 66 128 H40 Q48 100 46 62z" fill="#070707" opacity="0.55" filter="url(#b1)"/>
<path d="M36 42 Q34 70 37 95 Q35 115 37 128" fill="none" stroke="#c8c8c8" stroke-width="0.45" opacity="0.7"/>
<path d="M59 52 Q58 72 48 82 Q38 90 38 108" fill="none" stroke="#c8c8c8" stroke-width="0.45" opacity="0.7"/>
<path d="M50 128 Q58 118 68 120 Q73 123 73 128z" fill="#5a5a5a" filter="url(#b5)"/>
<rect x="0" y="128" width="95.2" height="9" fill="#343434" filter="url(#b5)"/>
</svg>
<div class="t" style="left:28.6px;top:158.6px;width:95.5px;text-align:center;font-size:8.1px;font-weight:bold;color:#111;transform:scaleX(0.96)">Relaxing Pop</div><div class="t" style="left:28.6px;top:168.3px;width:95.5px;text-align:center;font-size:7.5px;color:#6f6f73;-webkit-text-stroke:0.1px currentColor;transform:scaleX(0.98)">Get into the slow mode</div><div class="a" style="left:57.4px;top:179.7px;width:37.9px;height:16.6px;background:#e5453f;border-radius:2.8px"></div><div class="t" style="left:57.4px;top:184px;width:37.9px;text-align:center;font-size:8.5px;color:#fff;-webkit-text-stroke:0.1px currentColor;transform:scaleX(0.96)">Upvote</div><div class="a" style="left:28.6px;top:205.5px;width:95.5px;height:80px;border-radius:2.6px;background:#fff;box-shadow:0 0 0 0.5px #d9d9dc"></div><svg class="a" style="left:28.6px;top:205.8px;border-radius:2.6px 2.6px 0 0" width="95.6" height="70" viewBox="0 0 95.6 70">
<defs>
<filter id="c1" x="-50%" y="-50%" width="200%" height="200%"><feGaussianBlur stdDeviation="4"/></filter>
<filter id="c2" x="-50%" y="-50%" width="200%" height="200%"><feGaussianBlur stdDeviation="0.5"/></filter>
<filter id="c3" x="-50%" y="-50%" width="200%" height="200%"><feGaussianBlur stdDeviation="1.5"/></filter>
<filter id="c4" x="-10%" y="-10%" width="120%" height="120%"><feGaussianBlur stdDeviation="0.8"/></filter>
<radialGradient id="og" cx="0.5" cy="0.5" r="0.5"><stop offset="0" stop-color="#e8b040"/><stop offset="0.35" stop-color="#9a6a14"/><stop offset="0.75" stop-color="#4a320a"/><stop offset="1" stop-color="#2a1c07" stop-opacity="0"/></radialGradient>
<linearGradient id="arm" x1="0" y1="0" x2="1" y2="0"><stop offset="0" stop-color="#9a7e64"/><stop offset="0.35" stop-color="#5e4a3a"/><stop offset="1" stop-color="#4a3a2e"/></linearGradient>
<linearGradient id="arm2" x1="0" y1="0" x2="1" y2="0"><stop offset="0" stop-color="#4a3a2e"/><stop offset="0.6" stop-color="#5e4a3a"/><stop offset="1" stop-color="#a08060"/></linearGradient>
</defs>
<rect width="95.6" height="70" fill="#221709"/>
<ellipse cx="60" cy="20" rx="46" ry="32" fill="url(#og)" filter="url(#c1)"/>
<ellipse cx="86" cy="24" rx="12" ry="22" fill="#4a330e" opacity="0.5" filter="url(#c1)"/>
<rect x="0" y="0" width="40" height="15" fill="#1a1309" opacity="0.7" filter="url(#c1)"/>
<rect x="0" y="21" width="36" height="18" fill="#3a2810" opacity="0.6" filter="url(#c3)"/>
<g filter="url(#c4)">
<ellipse cx="3.2" cy="39.1" rx="5.1" ry="5.6" fill="#c08420" opacity="0.7"/>
<ellipse cx="4.0" cy="40.7" rx="4.2" ry="4.9" fill="#1c1206"/>
<ellipse cx="20.3" cy="36.3" rx="5.4" ry="5.9" fill="#c08420" opacity="0.7"/>
<ellipse cx="21.1" cy="37.9" rx="4.4" ry="5.1" fill="#1c1206"/>
<ellipse cx="37.5" cy="38.1" rx="4.9" ry="5.4" fill="#c08420" opacity="0.7"/>
<ellipse cx="38.3" cy="39.7" rx="4.0" ry="4.6" fill="#1c1206"/>
<ellipse cx="44.9" cy="35.0" rx="4.6" ry="5.1" fill="#c08420" opacity="0.7"/>
<ellipse cx="45.7" cy="36.6" rx="3.8" ry="4.4" fill="#1c1206"/>
<ellipse cx="62.4" cy="35.4" rx="5.4" ry="5.9" fill="#c08420" opacity="0.7"/>
<ellipse cx="63.2" cy="37.0" rx="4.4" ry="5.1" fill="#1c1206"/>
<ellipse cx="72.2" cy="36.4" rx="4.1" ry="4.5" fill="#c08420" opacity="0.7"/>
<ellipse cx="73.0" cy="38.0" rx="3.3" ry="3.9" fill="#1c1206"/>
<ellipse cx="94.2" cy="39.4" rx="5.5" ry="6.1" fill="#c08420" opacity="0.7"/>
<ellipse cx="95.0" cy="41.0" rx="4.5" ry="5.3" fill="#1c1206"/>
<ellipse cx="7.1" cy="44.2" rx="5.5" ry="6.0" fill="#c08420" opacity="0.7"/>
<ellipse cx="7.9" cy="45.8" rx="4.5" ry="5.2" fill="#1c1206"/>
<ellipse cx="17.9" cy="44.7" rx="6.8" ry="7.5" fill="#c08420" opacity="0.7"/>
<ellipse cx="18.7" cy="46.3" rx="5.6" ry="6.5" fill="#1c1206"/>
<ellipse cx="28.6" cy="44.9" rx="6.5" ry="7.2" fill="#c08420" opacity="0.7"/>
<ellipse cx="29.4" cy="46.5" rx="5.3" ry="6.2" fill="#1c1206"/>
<ellipse cx="38.2" cy="49.6" rx="5.8" ry="6.3" fill="#c08420" opacity="0.7"/>
<ellipse cx="39.0" cy="51.2" rx="4.7" ry="5.5" fill="#1c1206"/>
<ellipse cx="54.3" cy="46.1" rx="5.8" ry="6.4" fill="#c08420" opacity="0.7"/>
<ellipse cx="55.1" cy="47.7" rx="4.8" ry="5.5" fill="#1c1206"/>
<ellipse cx="62.7" cy="44.2" rx="6.6" ry="7.3" fill="#c08420" opacity="0.7"/>
<ellipse cx="63.5" cy="45.8" rx="5.4" ry="6.3" fill="#1c1206"/>
<ellipse cx="75.1" cy="48.7" rx="5.2" ry="5.8" fill="#c08420" opacity="0.7"/>
<ellipse cx="75.9" cy="50.3" rx="4.3" ry="5.0" fill="#1c1206"/>
<ellipse cx="94.1" cy="49.4" rx="6.4" ry="7.0" fill="#c08420" opacity="0.7"/>
<ellipse cx="94.9" cy="51.0" rx="5.2" ry="6.1" fill="#1c1206"/>
<ellipse cx="8.5" cy="58.5" rx="7.4" ry="8.1" fill="#c08420" opacity="0.7"/>
<ellipse cx="9.3" cy="60.1" rx="6.1" ry="7.0" fill="#1c1206"/>
<ellipse cx="14.3" cy="57.9" rx="7.6" ry="8.4" fill="#c08420" opacity="0.7"/>
<ellipse cx="15.1" cy="59.5" rx="6.3" ry="7.2" fill="#1c1206"/>
<ellipse cx="27.0" cy="60.5" rx="7.8" ry="8.6" fill="#c08420" opacity="0.7"/>
<ellipse cx="27.8" cy="62.1" rx="6.4" ry="7.4" fill="#1c1206"/>
<ellipse cx="41.0" cy="57.2" rx="6.7" ry="7.4" fill="#c08420" opacity="0.7"/>
<ellipse cx="41.8" cy="58.8" rx="5.5" ry="6.4" fill="#1c1206"/>
<ellipse cx="52.7" cy="61.0" rx="6.5" ry="7.2" fill="#c08420" opacity="0.7"/>
<ellipse cx="53.5" cy="62.6" rx="5.4" ry="6.2" fill="#1c1206"/>
<ellipse cx="61.2" cy="55.6" rx="7.4" ry="8.1" fill="#c08420" opacity="0.7"/>
<ellipse cx="62.0" cy="57.2" rx="6.0" ry="7.0" fill="#1c1206"/>
<ellipse cx="82.4" cy="58.0" rx="6.8" ry="7.5" fill="#c08420" opacity="0.7"/>
<ellipse cx="83.2" cy="59.6" rx="5.6" ry="6.5" fill="#1c1206"/>
<ellipse cx="90.1" cy="59.5" rx="6.1" ry="6.8" fill="#c08420" opacity="0.7"/>
<ellipse cx="90.9" cy="61.1" rx="5.0" ry="5.8" fill="#1c1206"/>
<ellipse cx="8.0" cy="68.3" rx="7.6" ry="8.4" fill="#c08420" opacity="0.7"/>
<ellipse cx="8.8" cy="69.9" rx="6.3" ry="7.3" fill="#1c1206"/>
<ellipse cx="17.0" cy="66.0" rx="6.9" ry="7.6" fill="#c08420" opacity="0.7"/>
<ellipse cx="17.8" cy="67.6" rx="5.7" ry="6.6" fill="#1c1206"/>
<ellipse cx="38.8" cy="67.1" rx="7.6" ry="8.3" fill="#c08420" opacity="0.7"/>
<ellipse cx="39.6" cy="68.7" rx="6.2" ry="7.2" fill="#1c1206"/>
<ellipse cx="45.7" cy="65.6" rx="6.2" ry="6.8" fill="#c08420" opacity="0.7"/>
<ellipse cx="46.5" cy="67.2" rx="5.1" ry="5.9" fill="#1c1206"/>
<ellipse cx="64.9" cy="69.7" rx="7.0" ry="7.7" fill="#c08420" opacity="0.7"/>
<ellipse cx="65.7" cy="71.3" rx="5.7" ry="6.6" fill="#1c1206"/>
<ellipse cx="77.1" cy="69.1" rx="8.4" ry="9.2" fill="#c08420" opacity="0.7"/>
<ellipse cx="77.9" cy="70.7" rx="6.9" ry="7.9" fill="#1c1206"/>
<ellipse cx="93.8" cy="67.4" rx="8.6" ry="9.5" fill="#c08420" opacity="0.7"/>
<ellipse cx="94.6" cy="69.0" rx="7.0" ry="8.2" fill="#1c1206"/>
</g>
<rect x="0" y="17" width="36" height="2.4" fill="#4a78e0" filter="url(#c2)"/>
<rect x="0" y="17.3" width="36" height="1.2" fill="#d8e6ff" opacity="0.85"/>
<rect x="4" y="19" width="1.8" height="4" fill="#3a5cc0" opacity="0.7" filter="url(#c2)"/>
<rect x="26" y="19" width="1.8" height="4" fill="#3a5cc0" opacity="0.7" filter="url(#c2)"/>
<ellipse cx="58" cy="4" rx="14" ry="8" fill="#d89a30" opacity="0.6" filter="url(#c1)"/>
<ellipse cx="54.5" cy="13" rx="5" ry="5.5" fill="#f6cc5a" opacity="0.9" filter="url(#c3)"/>
<path d="M31 70 L32.5 44 Q33.5 28 37 20 Q41 13 47 7 Q50 3 53 3.5 Q55 5 54 7 Q50 10 47 15 Q42.5 19 40.5 24 L38 36 L37 70 Z" fill="url(#arm)" filter="url(#c2)"/>
<path d="M68.5 70 L68.2 31 Q66 23 62 17 Q58 11 54.5 7 Q56 2.5 60 3 Q65 6 69 12 Q75.5 21 76.5 29 L76 70 Z" fill="url(#arm2)" filter="url(#c2)"/>
<path d="M47 15 Q50 20 52.1 22.5 Q56 19 61 16" fill="none" stroke="#5e4a3a" stroke-width="1.6" filter="url(#c2)"/>
<path d="M46 8 Q50 3 53 4" fill="none" stroke="#e6b456" stroke-width="0.8" opacity="0.8" filter="url(#c2)"/>
<rect x="67.6" y="29" width="10" height="3" rx="1" fill="#151515" filter="url(#c2)"/>
<rect x="67.6" y="32.6" width="10" height="1.5" rx="0.6" fill="#202020" filter="url(#c2)"/>
</svg></div>
<div class="a" style="left:523.8px;top:414.3px;width:32.4px;height:32.4px;border:0.9px solid #8c8c8e;border-radius:50%"></div>

<!-- inspector -->
<div class="a" id="insp"></div>
<div class="a" style="left:677px;top:18px;width:123px;height:13px;background:#262628;border-bottom:1px solid #1f1f21"></div>
<div class="a" style="left:794px;top:31px;width:6px;height:418px;background:#2f2f31"></div>
<svg class="a" style="left:677px;top:18px" width="123" height="12" viewBox="0 0 123 12"><path d="M31.5 3.2 h2.8 l2 2 v4.2 h-4.8z" fill="none" stroke="#a3a3a6" stroke-width="0.7"/><circle cx="47.7" cy="6.1" r="2.9" fill="none" stroke="#a3a3a6" stroke-width="0.7"/><path d="M47.7 4.3 v2.1 h-1.6" fill="none" stroke="#a3a3a6" stroke-width="0.6"/><circle cx="62" cy="6.1" r="2.9" fill="none" stroke="#a3a3a6" stroke-width="0.7"/><path d="M61 5.1 q0 -1.2 1 -1.2 q1.1 0 1.1 1 q0 0.7 -1.1 1.2 v0.6" fill="none" stroke="#a3a3a6" stroke-width="0.55"/><circle cx="62" cy="7.9" r="0.35" fill="#a3a3a6"/><circle cx="76.3" cy="6.1" r="2.9" fill="none" stroke="#a3a3a6" stroke-width="0.7"/><circle cx="76.3" cy="4.3" r="0.5" fill="#a3a3a6"/><path d="M74.9 5.3 h2.8 M76.3 5.3 v1.3 l-0.9 1.5 M76.3 6.6 l0.9 1.5" fill="none" stroke="#a3a3a6" stroke-width="0.55"/><path d="M87.5 3.6 h6.5 M87.5 6.1 h6.5 M87.5 8.6 h6.5" stroke="#2f7cf6" stroke-width="0.7"/><circle cx="92.5" cy="3.6" r="0.9" fill="#2f7cf6"/><circle cx="89" cy="6.1" r="0.9" fill="#2f7cf6"/><circle cx="92" cy="8.6" r="0.9" fill="#2f7cf6"/></svg>
<div class="t sec" style="left:682px;top:34.04px">Playlists View</div>
<div class="hsep" style="top:52.5px"></div>
<div class="t sec" style="left:720px;top:56.94px;width:31px;text-align:center">Modifiers</div>
<div class="hsep" style="top:67px"></div>
<div class="t sec" style="left:682px;top:70.84px">Preview</div>
<div class="t il" style="left:659px;top:84.532px">Name</div>
<div class="a" style="left:724px;top:83.1px;width:60px;height:7px;background:#333335;border-bottom:0.6px solid #3d3d40"></div><div class="t" style="left:726px;top:84.264px;font-size:5.6px;color:#68686b">Inherited</div>
<svg class="a" style="left:786px;top:83.19999999999999px" width="7" height="7" viewBox="0 0 7 7"><circle cx="3.5" cy="3.4" r="2.55" fill="none" stroke="#6a6a6d" stroke-width="0.6"/></svg>
<div class="t il" style="left:659px;top:95.33200000000001px">Device</div>
<div class="fld" style="top:93.9px"><span>Inherited</span><i></i></div><svg class="a" style="left:778px;top:93.9px" width="6" height="7" viewBox="0 0 6 7"><path d="M1.8 2.6 l1.2 -1.2 l1.2 1.2 M1.8 4.4 l1.2 1.2 l1.2 -1.2" fill="none" stroke="#fff" stroke-width="0.6"/></svg>
<svg class="a" style="left:786px;top:94.0px" width="7" height="7" viewBox="0 0 7 7"><circle cx="3.5" cy="3.4" r="2.55" fill="none" stroke="#6a6a6d" stroke-width="0.6"/></svg>
<div class="t il" style="left:659px;top:106.232px">Layout</div>
<div class="fld" style="top:104.8px"><span>Inherited</span><i></i></div><svg class="a" style="left:778px;top:104.8px" width="6" height="7" viewBox="0 0 6 7"><path d="M1.8 2.6 l1.2 -1.2 l1.2 1.2 M1.8 4.4 l1.2 1.2 l1.2 -1.2" fill="none" stroke="#fff" stroke-width="0.6"/></svg>
<svg class="a" style="left:786px;top:104.89999999999999px" width="7" height="7" viewBox="0 0 7 7"><circle cx="3.5" cy="3.4" r="2.55" fill="none" stroke="#6a6a6d" stroke-width="0.6"/></svg>
<div class="t il" style="left:659px;top:117.232px">Orientation</div>
<div class="fld" style="top:115.8px"><span>Inherited</span><i></i></div><svg class="a" style="left:778px;top:115.8px" width="6" height="7" viewBox="0 0 6 7"><path d="M1.8 2.6 l1.2 -1.2 l1.2 1.2 M1.8 4.4 l1.2 1.2 l1.2 -1.2" fill="none" stroke="#fff" stroke-width="0.6"/></svg>
<svg class="a" style="left:786px;top:115.89999999999999px" width="7" height="7" viewBox="0 0 7 7"><circle cx="3.5" cy="3.4" r="2.55" fill="none" stroke="#6a6a6d" stroke-width="0.6"/></svg>
<div class="hsep" style="top:131.3px"></div>
<div class="t sec" style="left:682px;top:135.14px">Color Scheme</div>
<div class="t il" style="left:659px;top:148.93200000000002px">Scheme</div>
<div class="fld" style="top:147.5px"><span>Inherited</span><i></i></div><svg class="a" style="left:778px;top:147.5px" width="6" height="7" viewBox="0 0 6 7"><path d="M1.8 2.6 l1.2 -1.2 l1.2 1.2 M1.8 4.4 l1.2 1.2 l1.2 -1.2" fill="none" stroke="#fff" stroke-width="0.6"/></svg>
<svg class="a" style="left:786px;top:147.6px" width="7" height="7" viewBox="0 0 7 7"><circle cx="3.5" cy="3.4" r="2.55" fill="none" stroke="#6a6a6d" stroke-width="0.6"/></svg>
<div class="hsep" style="top:163.3px"></div>
<div class="t sec" style="left:682px;top:166.84px">Dynamic Type</div>
<div class="t il" style="left:659px;top:180.33200000000002px">Size</div>
<div class="fld" style="top:178.9px"><span>Inherited</span><i></i></div><svg class="a" style="left:778px;top:178.9px" width="6" height="7" viewBox="0 0 6 7"><path d="M1.8 2.6 l1.2 -1.2 l1.2 1.2 M1.8 4.4 l1.2 1.2 l1.2 -1.2" fill="none" stroke="#fff" stroke-width="0.6"/></svg>
<svg class="a" style="left:786px;top:179.0px" width="7" height="7" viewBox="0 0 7 7"><circle cx="3.5" cy="3.4" r="2.55" fill="none" stroke="#6a6a6d" stroke-width="0.6"/></svg>
<div class="hsep" style="top:194.4px"></div>
<div class="t sec" style="left:682px;top:198.23999999999998px">Accessibility</div>
<div class="t il" style="left:659px;top:211.93200000000002px">Label</div>
<div class="a" style="left:724px;top:210.5px;width:60px;height:7px;background:#333335;border-bottom:0.6px solid #3d3d40"></div><div class="t" style="left:726px;top:211.66400000000002px;font-size:5.6px;color:#68686b">Inherited</div>
<svg class="a" style="left:786px;top:210.6px" width="7" height="7" viewBox="0 0 7 7"><circle cx="3.5" cy="3.4" r="2.55" fill="none" stroke="#6a6a6d" stroke-width="0.6"/></svg>
<div class="t il" style="left:659px;top:222.93200000000002px">Identifier</div>
<div class="a" style="left:724px;top:221.5px;width:60px;height:7px;background:#333335;border-bottom:0.6px solid #3d3d40"></div><div class="t" style="left:726px;top:222.66400000000002px;font-size:5.6px;color:#68686b">Inherited</div>
<svg class="a" style="left:786px;top:221.6px" width="7" height="7" viewBox="0 0 7 7"><circle cx="3.5" cy="3.4" r="2.55" fill="none" stroke="#6a6a6d" stroke-width="0.6"/></svg>
<div class="hsep" style="top:237.3px"></div>
<div class="t sec" style="left:682px;top:241.04px">Padding</div>
<div class="t il" style="left:659px;top:265.43199999999996px">Padding</div>
<svg class="a" style="left:786px;top:264.1px" width="7" height="7" viewBox="0 0 7 7"><circle cx="3.5" cy="3.4" r="2.55" fill="none" stroke="#6a6a6d" stroke-width="0.6"/></svg>
<svg class="a" style="left:720px;top:250px" width="70" height="36" viewBox="0 0 70 36"><path d="M7.5 9.5 v-3.8 h53.8 v3.8 M7.5 24 v5.5 h53.8 v-5.5" fill="none" stroke="#5b5b5e" stroke-width="0.6"/><rect x="32.2" y="2.8" width="4.4" height="4.4" rx="0.6" fill="#6a6a6d"/><rect x="32.2" y="27.8" width="4.4" height="4.4" rx="0.6" fill="#6a6a6d"/><rect x="4.6" y="15.3" width="4.6" height="4.6" rx="0.6" fill="#6a6a6d"/><rect x="59.6" y="15.3" width="4.6" height="4.6" rx="0.6" fill="#6a6a6d"/><rect x="15.3" y="14.2" width="37.6" height="7.3" rx="1.5" fill="#3a3a3d"/><path d="M18.2 17.9 h2.2 M47.8 17.9 h2.2 M48.9 16.8 v2.2" stroke="#909093" stroke-width="0.65"/></svg>
<div class="t" style="left:740.5px;top:265.364px;font-size:5.6px;color:#6f6f72">Inherite</div>
<div class="hsep" style="top:290.3px"></div>
<div class="t sec" style="left:682px;top:294.23999999999995px">Frame</div>
<div class="t il" style="left:659px;top:307.93199999999996px">Size</div>
<svg class="a" style="left:786px;top:306.6px" width="7" height="7" viewBox="0 0 7 7"><circle cx="3.5" cy="3.4" r="2.55" fill="none" stroke="#6a6a6d" stroke-width="0.6"/></svg>
<div class="a" style="left:724.3px;top:306.6px;width:27.2px;height:7.3px;background:#333335;border-radius:1.5px"></div>
<div class="t" style="left:733.4px;top:307.964px;font-size:5.6px;color:#5f5f62">Inh</div>
<div class="a" style="left:726.8px;top:309.9px;width:1.6px;height:0.6px;background:#69696c"></div>
<div class="a" style="left:747.3px;top:309.9px;width:1.6px;height:0.6px;background:#69696c"></div><div class="a" style="left:747.8px;top:309.4px;width:0.6px;height:1.6px;background:#69696c"></div>
<div class="t" style="left:727.9px;top:316.012px;width:20px;text-align:center;font-size:4.8px;color:#b4b4b6">Width</div>
<div class="a" style="left:756.9px;top:306.6px;width:27.2px;height:7.3px;background:#333335;border-radius:1.5px"></div>
<div class="t" style="left:766.0px;top:307.964px;font-size:5.6px;color:#5f5f62">Inh</div>
<div class="a" style="left:759.4px;top:309.9px;width:1.6px;height:0.6px;background:#69696c"></div>
<div class="a" style="left:779.9px;top:309.9px;width:1.6px;height:0.6px;background:#69696c"></div><div class="a" style="left:780.4px;top:309.4px;width:0.6px;height:1.6px;background:#69696c"></div>
<div class="t" style="left:760.2px;top:316.012px;width:20px;text-align:center;font-size:4.8px;color:#b4b4b6">Height</div>
<div class="hsep" style="top:327.2px"></div>
<div class="a" style="left:685px;top:336.3px;width:101px;height:8.7px;background:#313133;border-bottom:0.6px solid #464649"></div>
<div class="t" style="left:686.5px;top:338.084px;font-size:6.1px;color:#6a6a6d">Add Modifier</div>
</div></body></html>
